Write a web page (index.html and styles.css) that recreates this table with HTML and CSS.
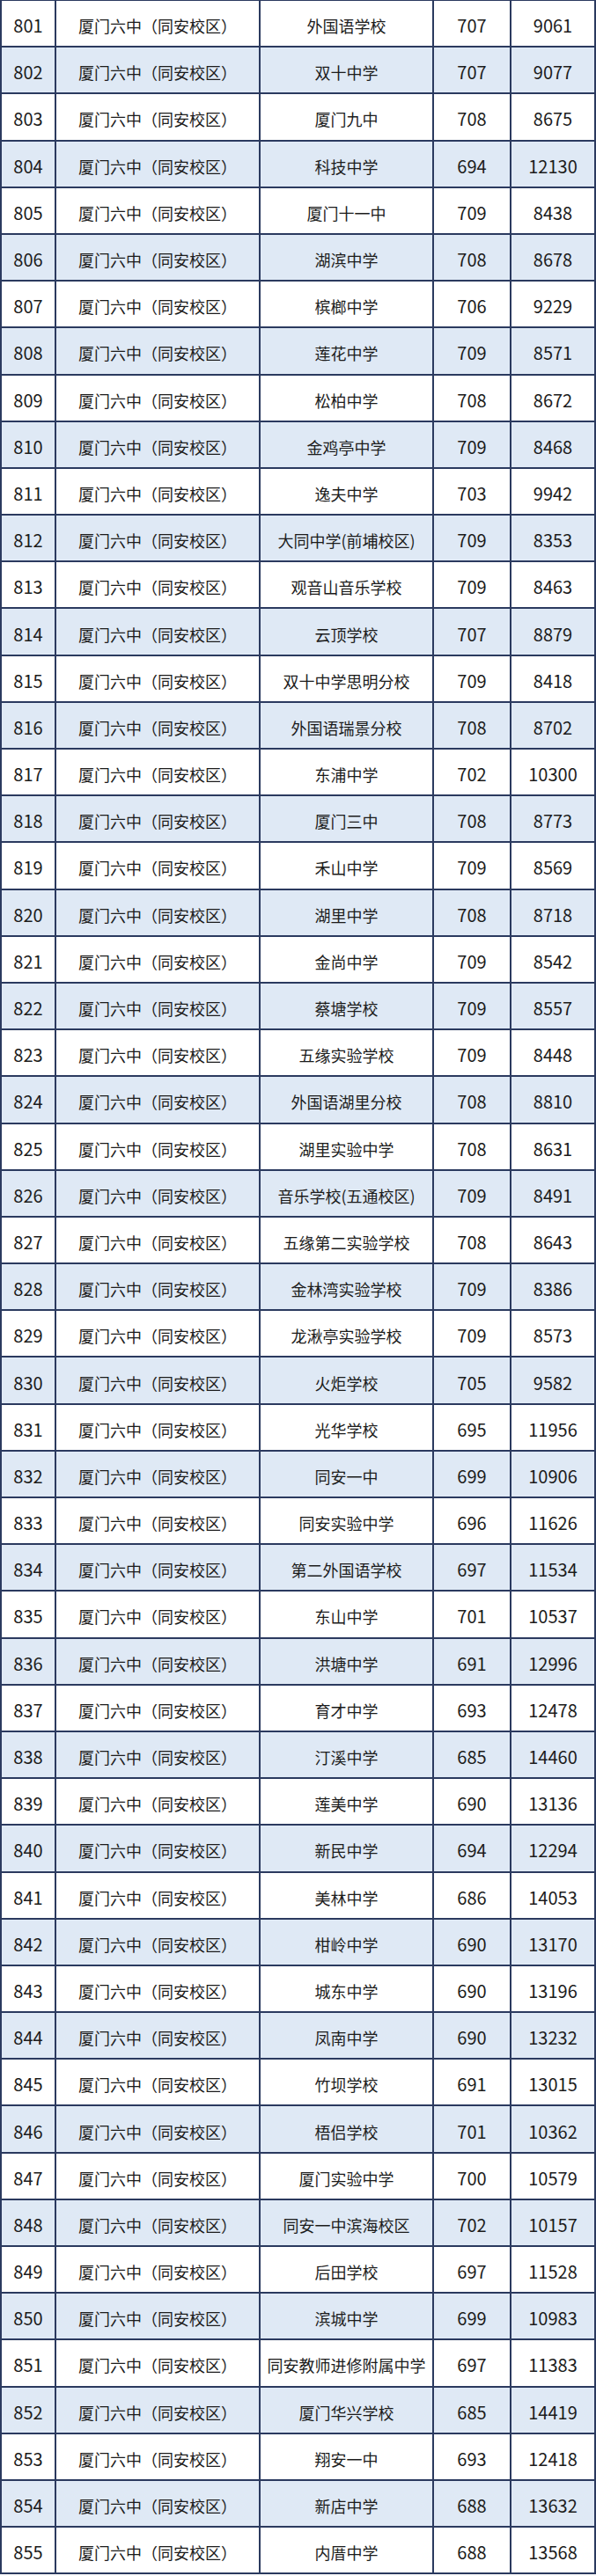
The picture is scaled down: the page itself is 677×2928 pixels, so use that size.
FILE: index.html
```html
<!DOCTYPE html>
<html lang="zh-CN">
<head>
<meta charset="utf-8">
<title>录取排名</title>
<link rel="stylesheet" href="styles.css">
</head>
<body>
<div class="table">
<div class="row"><div class="c">801</div><div class="c">厦门六中（同安校区）</div><div class="c">外国语学校</div><div class="c">707</div><div class="c">9061</div></div>
<div class="row"><div class="c">802</div><div class="c">厦门六中（同安校区）</div><div class="c">双十中学</div><div class="c">707</div><div class="c">9077</div></div>
<div class="row"><div class="c">803</div><div class="c">厦门六中（同安校区）</div><div class="c">厦门九中</div><div class="c">708</div><div class="c">8675</div></div>
<div class="row"><div class="c">804</div><div class="c">厦门六中（同安校区）</div><div class="c">科技中学</div><div class="c">694</div><div class="c">12130</div></div>
<div class="row"><div class="c">805</div><div class="c">厦门六中（同安校区）</div><div class="c">厦门十一中</div><div class="c">709</div><div class="c">8438</div></div>
<div class="row"><div class="c">806</div><div class="c">厦门六中（同安校区）</div><div class="c">湖滨中学</div><div class="c">708</div><div class="c">8678</div></div>
<div class="row"><div class="c">807</div><div class="c">厦门六中（同安校区）</div><div class="c">槟榔中学</div><div class="c">706</div><div class="c">9229</div></div>
<div class="row"><div class="c">808</div><div class="c">厦门六中（同安校区）</div><div class="c">莲花中学</div><div class="c">709</div><div class="c">8571</div></div>
<div class="row"><div class="c">809</div><div class="c">厦门六中（同安校区）</div><div class="c">松柏中学</div><div class="c">708</div><div class="c">8672</div></div>
<div class="row"><div class="c">810</div><div class="c">厦门六中（同安校区）</div><div class="c">金鸡亭中学</div><div class="c">709</div><div class="c">8468</div></div>
<div class="row"><div class="c">811</div><div class="c">厦门六中（同安校区）</div><div class="c">逸夫中学</div><div class="c">703</div><div class="c">9942</div></div>
<div class="row"><div class="c">812</div><div class="c">厦门六中（同安校区）</div><div class="c">大同中学(前埔校区)</div><div class="c">709</div><div class="c">8353</div></div>
<div class="row"><div class="c">813</div><div class="c">厦门六中（同安校区）</div><div class="c">观音山音乐学校</div><div class="c">709</div><div class="c">8463</div></div>
<div class="row"><div class="c">814</div><div class="c">厦门六中（同安校区）</div><div class="c">云顶学校</div><div class="c">707</div><div class="c">8879</div></div>
<div class="row"><div class="c">815</div><div class="c">厦门六中（同安校区）</div><div class="c">双十中学思明分校</div><div class="c">709</div><div class="c">8418</div></div>
<div class="row"><div class="c">816</div><div class="c">厦门六中（同安校区）</div><div class="c">外国语瑞景分校</div><div class="c">708</div><div class="c">8702</div></div>
<div class="row"><div class="c">817</div><div class="c">厦门六中（同安校区）</div><div class="c">东浦中学</div><div class="c">702</div><div class="c">10300</div></div>
<div class="row"><div class="c">818</div><div class="c">厦门六中（同安校区）</div><div class="c">厦门三中</div><div class="c">708</div><div class="c">8773</div></div>
<div class="row"><div class="c">819</div><div class="c">厦门六中（同安校区）</div><div class="c">禾山中学</div><div class="c">709</div><div class="c">8569</div></div>
<div class="row"><div class="c">820</div><div class="c">厦门六中（同安校区）</div><div class="c">湖里中学</div><div class="c">708</div><div class="c">8718</div></div>
<div class="row"><div class="c">821</div><div class="c">厦门六中（同安校区）</div><div class="c">金尚中学</div><div class="c">709</div><div class="c">8542</div></div>
<div class="row"><div class="c">822</div><div class="c">厦门六中（同安校区）</div><div class="c">蔡塘学校</div><div class="c">709</div><div class="c">8557</div></div>
<div class="row"><div class="c">823</div><div class="c">厦门六中（同安校区）</div><div class="c">五缘实验学校</div><div class="c">709</div><div class="c">8448</div></div>
<div class="row"><div class="c">824</div><div class="c">厦门六中（同安校区）</div><div class="c">外国语湖里分校</div><div class="c">708</div><div class="c">8810</div></div>
<div class="row"><div class="c">825</div><div class="c">厦门六中（同安校区）</div><div class="c">湖里实验中学</div><div class="c">708</div><div class="c">8631</div></div>
<div class="row"><div class="c">826</div><div class="c">厦门六中（同安校区）</div><div class="c">音乐学校(五通校区)</div><div class="c">709</div><div class="c">8491</div></div>
<div class="row"><div class="c">827</div><div class="c">厦门六中（同安校区）</div><div class="c">五缘第二实验学校</div><div class="c">708</div><div class="c">8643</div></div>
<div class="row"><div class="c">828</div><div class="c">厦门六中（同安校区）</div><div class="c">金林湾实验学校</div><div class="c">709</div><div class="c">8386</div></div>
<div class="row"><div class="c">829</div><div class="c">厦门六中（同安校区）</div><div class="c">龙湫亭实验学校</div><div class="c">709</div><div class="c">8573</div></div>
<div class="row"><div class="c">830</div><div class="c">厦门六中（同安校区）</div><div class="c">火炬学校</div><div class="c">705</div><div class="c">9582</div></div>
<div class="row"><div class="c">831</div><div class="c">厦门六中（同安校区）</div><div class="c">光华学校</div><div class="c">695</div><div class="c">11956</div></div>
<div class="row"><div class="c">832</div><div class="c">厦门六中（同安校区）</div><div class="c">同安一中</div><div class="c">699</div><div class="c">10906</div></div>
<div class="row"><div class="c">833</div><div class="c">厦门六中（同安校区）</div><div class="c">同安实验中学</div><div class="c">696</div><div class="c">11626</div></div>
<div class="row"><div class="c">834</div><div class="c">厦门六中（同安校区）</div><div class="c">第二外国语学校</div><div class="c">697</div><div class="c">11534</div></div>
<div class="row"><div class="c">835</div><div class="c">厦门六中（同安校区）</div><div class="c">东山中学</div><div class="c">701</div><div class="c">10537</div></div>
<div class="row"><div class="c">836</div><div class="c">厦门六中（同安校区）</div><div class="c">洪塘中学</div><div class="c">691</div><div class="c">12996</div></div>
<div class="row"><div class="c">837</div><div class="c">厦门六中（同安校区）</div><div class="c">育才中学</div><div class="c">693</div><div class="c">12478</div></div>
<div class="row"><div class="c">838</div><div class="c">厦门六中（同安校区）</div><div class="c">汀溪中学</div><div class="c">685</div><div class="c">14460</div></div>
<div class="row"><div class="c">839</div><div class="c">厦门六中（同安校区）</div><div class="c">莲美中学</div><div class="c">690</div><div class="c">13136</div></div>
<div class="row"><div class="c">840</div><div class="c">厦门六中（同安校区）</div><div class="c">新民中学</div><div class="c">694</div><div class="c">12294</div></div>
<div class="row"><div class="c">841</div><div class="c">厦门六中（同安校区）</div><div class="c">美林中学</div><div class="c">686</div><div class="c">14053</div></div>
<div class="row"><div class="c">842</div><div class="c">厦门六中（同安校区）</div><div class="c">柑岭中学</div><div class="c">690</div><div class="c">13170</div></div>
<div class="row"><div class="c">843</div><div class="c">厦门六中（同安校区）</div><div class="c">城东中学</div><div class="c">690</div><div class="c">13196</div></div>
<div class="row"><div class="c">844</div><div class="c">厦门六中（同安校区）</div><div class="c">凤南中学</div><div class="c">690</div><div class="c">13232</div></div>
<div class="row"><div class="c">845</div><div class="c">厦门六中（同安校区）</div><div class="c">竹坝学校</div><div class="c">691</div><div class="c">13015</div></div>
<div class="row"><div class="c">846</div><div class="c">厦门六中（同安校区）</div><div class="c">梧侣学校</div><div class="c">701</div><div class="c">10362</div></div>
<div class="row"><div class="c">847</div><div class="c">厦门六中（同安校区）</div><div class="c">厦门实验中学</div><div class="c">700</div><div class="c">10579</div></div>
<div class="row"><div class="c">848</div><div class="c">厦门六中（同安校区）</div><div class="c">同安一中滨海校区</div><div class="c">702</div><div class="c">10157</div></div>
<div class="row"><div class="c">849</div><div class="c">厦门六中（同安校区）</div><div class="c">后田学校</div><div class="c">697</div><div class="c">11528</div></div>
<div class="row"><div class="c">850</div><div class="c">厦门六中（同安校区）</div><div class="c">滨城中学</div><div class="c">699</div><div class="c">10983</div></div>
<div class="row"><div class="c">851</div><div class="c">厦门六中（同安校区）</div><div class="c">同安教师进修附属中学</div><div class="c">697</div><div class="c">11383</div></div>
<div class="row"><div class="c">852</div><div class="c">厦门六中（同安校区）</div><div class="c">厦门华兴学校</div><div class="c">685</div><div class="c">14419</div></div>
<div class="row"><div class="c">853</div><div class="c">厦门六中（同安校区）</div><div class="c">翔安一中</div><div class="c">693</div><div class="c">12418</div></div>
<div class="row"><div class="c">854</div><div class="c">厦门六中（同安校区）</div><div class="c">新店中学</div><div class="c">688</div><div class="c">13632</div></div>
<div class="row"><div class="c">855</div><div class="c">厦门六中（同安校区）</div><div class="c">内厝中学</div><div class="c">688</div><div class="c">13568</div></div>
</div>
</body>
</html>
```

FILE: styles.css
```css
html, body {
  margin: 0;
  padding: 0;
  background: #ffffff;
}

body {
  width: 677px;
  font-family: "Noto Sans CJK SC", "Noto Sans", sans-serif;
  font-size: 18px;
  color: #1c1c1c;
}

.table {
  box-sizing: border-box;
  width: 677px;
  border-left: 2px solid #2b3a5f;
  border-top: 1px solid #2b3a5f;
}

.row {
  display: grid;
  grid-template-columns: 62px 232px 197px 88px 96px;
  height: 53.2px;
  box-sizing: border-box;
  border-bottom: 2px solid #2b3a5f;
  background: #ffffff;
}

.row:nth-child(even) {
  background: #dfe9f5;
}

.c {
  display: flex;
  align-items: center;
  justify-content: center;
  border-right: 2px solid #2b3a5f;
  padding-top: 5px;
  box-sizing: border-box;
  white-space: nowrap;
  line-height: 1;
}

.c:nth-child(1),
.c:nth-child(4),
.c:nth-child(5) {
  font-size: 20px;
}
```
